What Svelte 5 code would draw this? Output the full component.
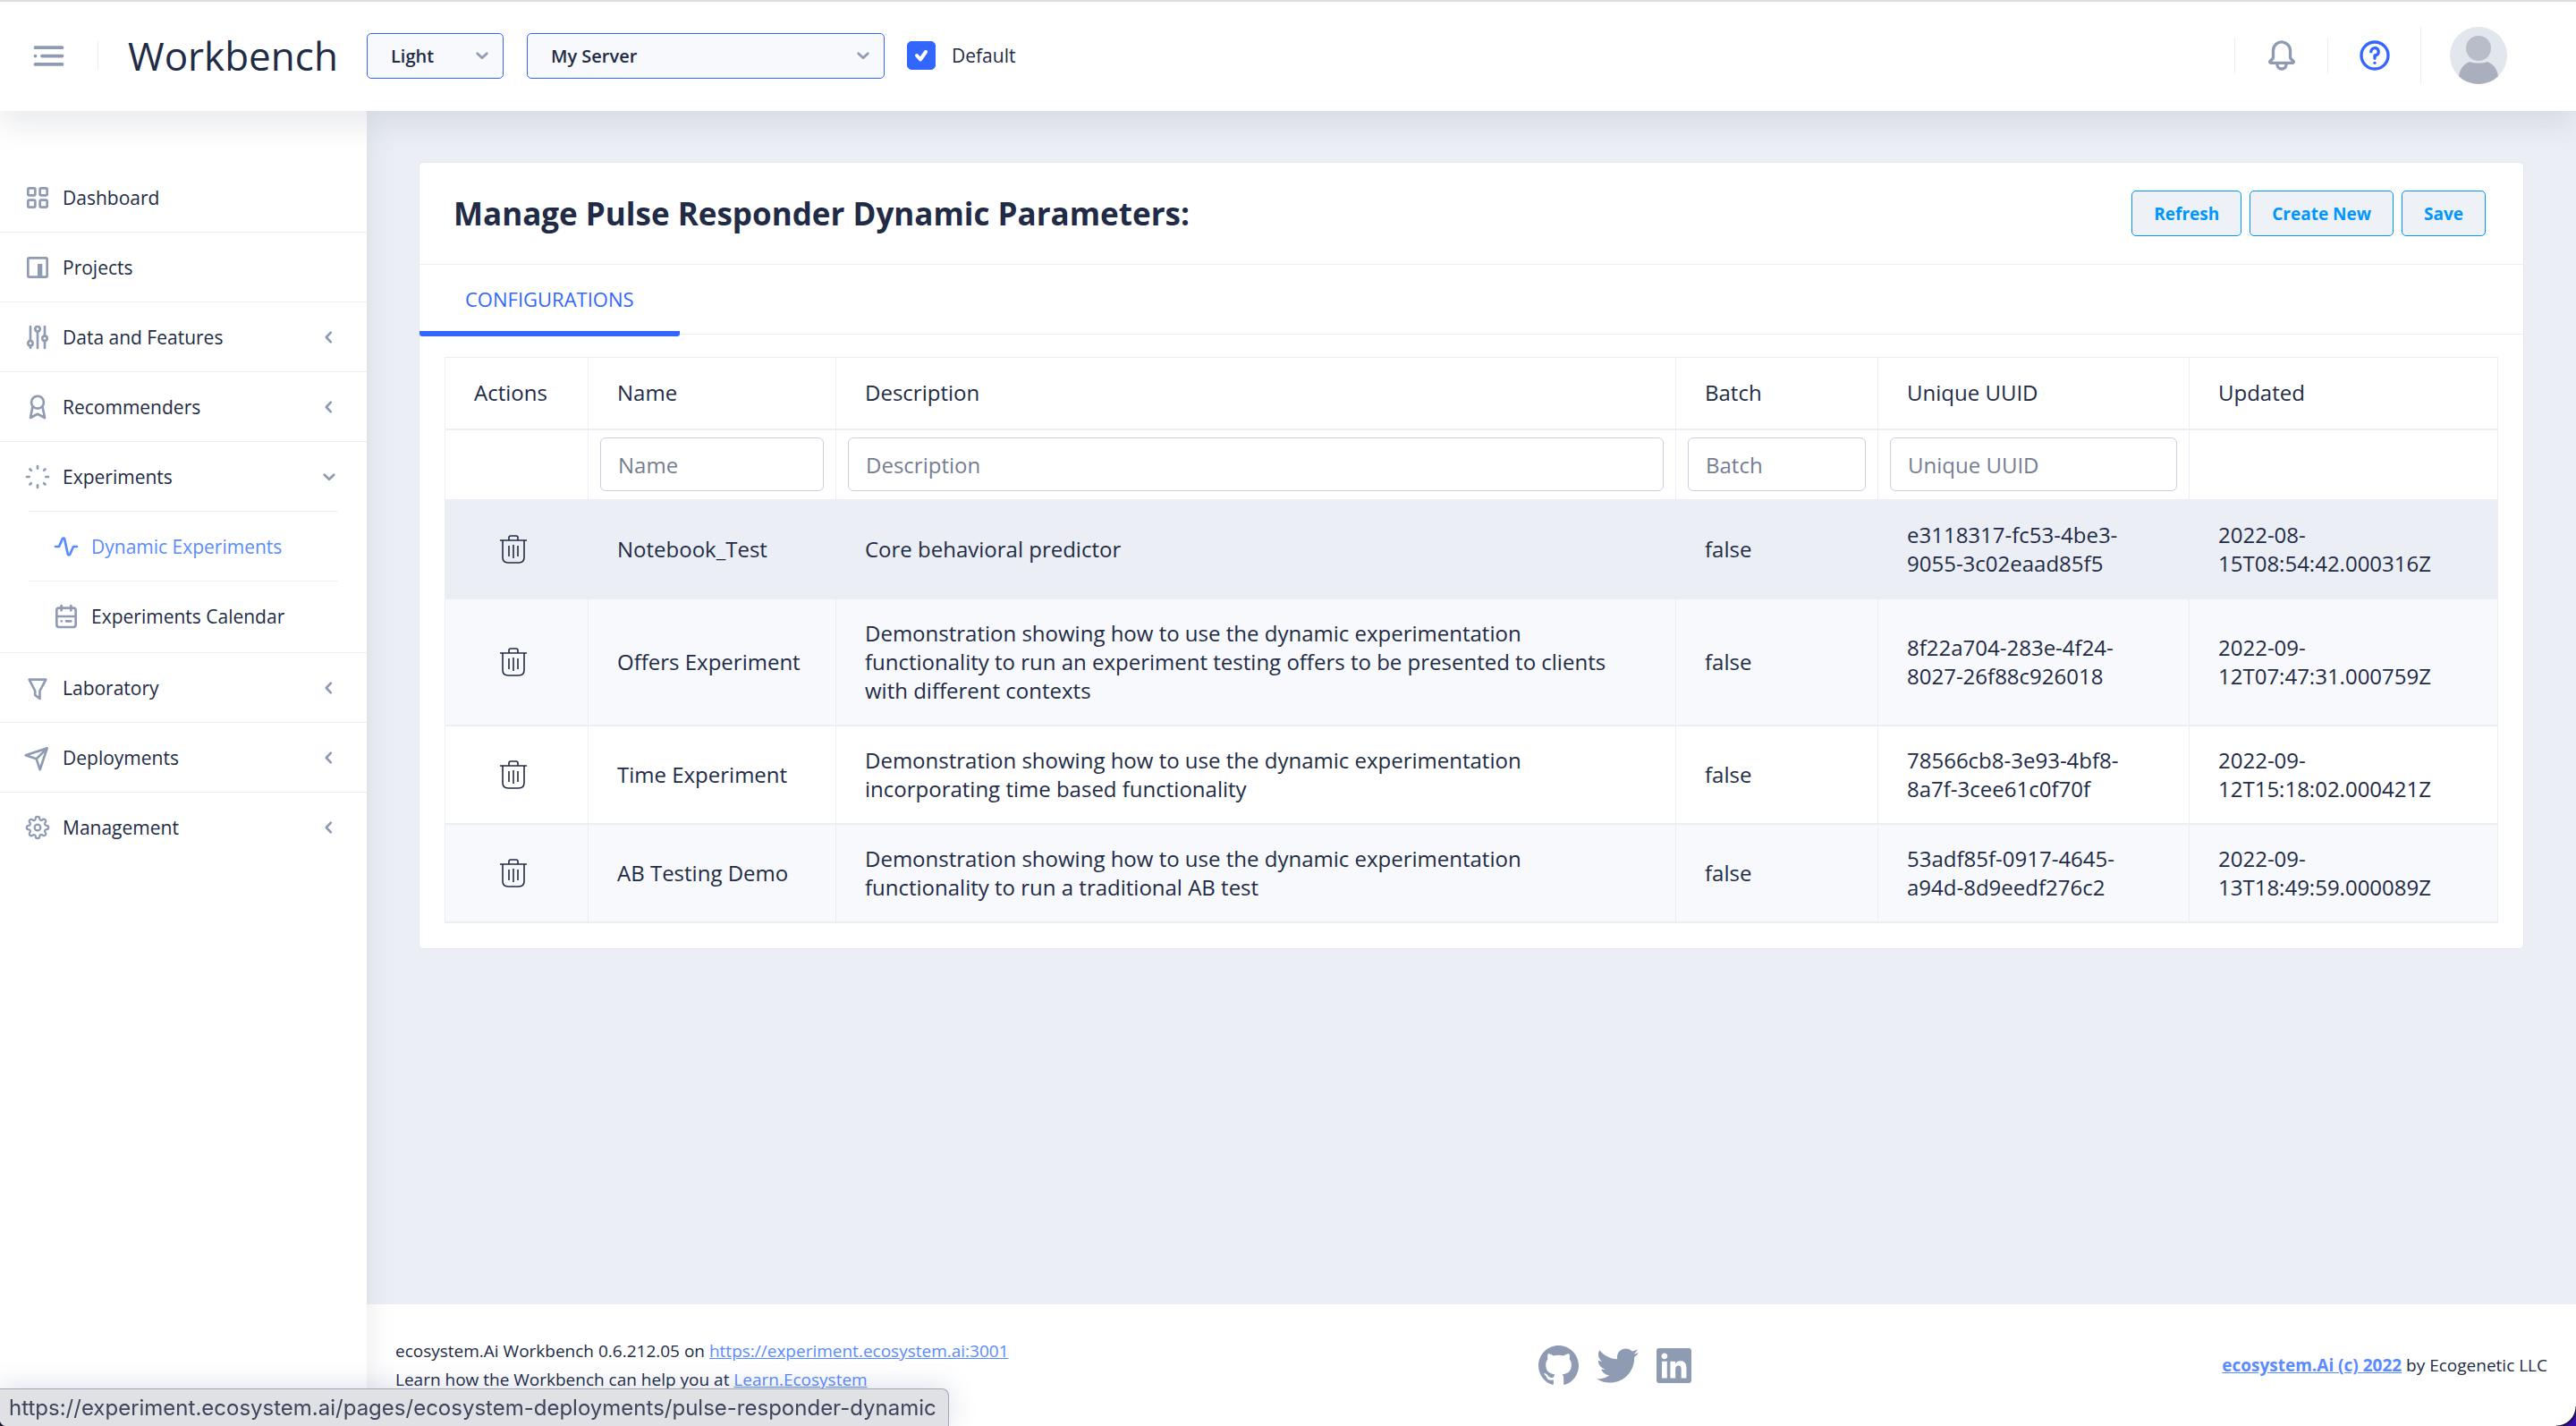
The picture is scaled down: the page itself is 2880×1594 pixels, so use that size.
<script>
  let theme = 'Light';
  let server = 'My Server';
  let isDefault = true;

  const menu = [
    { title: 'Dashboard', icon: 'grid' },
    { title: 'Projects', icon: 'projects' },
    { title: 'Data and Features', icon: 'options', group: true },
    { title: 'Recommenders', icon: 'award', group: true },
    {
      title: 'Experiments',
      icon: 'loader',
      group: true,
      children: [
        { title: 'Dynamic Experiments', icon: 'activity', active: true },
        { title: 'Experiments Calendar', icon: 'calendar' }
      ]
    },
    { title: 'Laboratory', icon: 'funnel', group: true },
    { title: 'Deployments', icon: 'plane', group: true },
    { title: 'Management', icon: 'settings', group: true }
  ];

  const columns = [
    { key: 'name', title: 'Name' },
    { key: 'description', title: 'Description' },
    { key: 'batch', title: 'Batch' },
    { key: 'uuid', title: 'Unique UUID' },
    { key: 'updated', title: 'Updated', noFilter: true }
  ];

  const rows = [
    {
      name: 'Notebook_Test',
      description: 'Core behavioral predictor',
      batch: 'false',
      uuid: 'e3118317-fc53-4be3-9055-3c02eaad85f5',
      updated: '2022-08-15T08:54:42.000316Z'
    },
    {
      name: 'Offers Experiment',
      description:
        'Demonstration showing how to use the dynamic experimentation functionality to run an experiment testing offers to be presented to clients with different contexts',
      batch: 'false',
      uuid: '8f22a704-283e-4f24-8027-26f88c926018',
      updated: '2022-09-12T07:47:31.000759Z'
    },
    {
      name: 'Time Experiment',
      description:
        'Demonstration showing how to use the dynamic experimentation incorporating time based functionality',
      batch: 'false',
      uuid: '78566cb8-3e93-4bf8-8a7f-3cee61c0f70f',
      updated: '2022-09-12T15:18:02.000421Z'
    },
    {
      name: 'AB Testing Demo',
      description:
        'Demonstration showing how to use the dynamic experimentation functionality to run a traditional AB test',
      batch: 'false',
      uuid: '53adf85f-0917-4645-a94d-8d9eedf276c2',
      updated: '2022-09-13T18:49:59.000089Z'
    }
  ];

  let filters = { name: '', description: '', batch: '', uuid: '' };
  let selected = 0;

  $: visible = rows.filter((row) =>
    Object.keys(filters).every((key) => row[key].toLowerCase().includes(filters[key].toLowerCase()))
  );
</script>

{#snippet icon(name)}
  <svg class="icon" viewBox="0 0 24 24" aria-hidden="true">
    {#if name === 'grid'}
      <g class="line">
        <rect x="4" y="4" width="6" height="6" rx="1" />
        <rect x="14" y="4" width="6" height="6" rx="1" />
        <rect x="4" y="14" width="6" height="6" rx="1" />
        <rect x="14" y="14" width="6" height="6" rx="1" />
      </g>
    {:else if name === 'projects'}
      <rect class="line" x="4" y="4" width="16" height="16" rx="1" />
      <rect x="12" y="9" width="4" height="11" />
    {:else if name === 'options'}
      <g class="line">
        <path d="M6 3v12M6 19v2M12 7v14M18 3v8M18 15v6" />
        <circle cx="6" cy="17" r="2" />
        <circle cx="12" cy="5" r="2" />
        <circle cx="18" cy="13" r="2" />
      </g>
    {:else if name === 'award'}
      <g class="line">
        <circle cx="12" cy="8" r="5.2" />
        <path d="M7.8 12L6 21l6-3.2L18 21l-1.8-9" />
      </g>
    {:else if name === 'loader'}
      <path
        class="line"
        d="M12 3v2M12 19v2M3 12h2M19 12h2M5.6 5.6l1 1M17.4 17.4l1 1M18.4 5.6l-1 1M6.6 17.4l-1 1"
      />
    {:else if name === 'activity'}
      <path
        d="M14.33 20h-.21a2 2 0 0 1-1.76-1.58L9.68 6l-2.76 6.4A1 1 0 0 1 6 13H3a1 1 0 0 1 0-2h2.34l2.51-5.79a2 2 0 0 1 3.79.38L14.32 18l2.76-6.38A1 1 0 0 1 18 11h3a1 1 0 0 1 0 2h-2.34l-2.51 5.79A2 2 0 0 1 14.33 20z"
      />
    {:else if name === 'calendar'}
      <g class="line">
        <rect x="4" y="5" width="16" height="16" rx="2" />
        <path d="M8 3v4M16 3v4M4 12h16M8 16h.01M12 16h4" />
      </g>
    {:else if name === 'funnel'}
      <path
        d="M13.9 22a1 1 0 0 1-.6-.2l-4-3.05a1 1 0 0 1-.39-.8v-3.27l-4.8-9.22A1 1 0 0 1 5 4h14a1 1 0 0 1 .86.49 1 1 0 0 1 0 1l-5 9.21V21a1 1 0 0 1-.55.9 1 1 0 0 1-.41.1zm-3-4.54l2 1.53v-4.55A1 1 0 0 1 13 14l4.3-8H6.64l4.13 8a1 1 0 0 1 .11.46z"
      />
    {:else if name === 'plane'}
      <path
        d="M21 4a1.31 1.31 0 0 0-.06-.27v-.09a1 1 0 0 0-.2-.3 1 1 0 0 0-.29-.19h-.09a.86.86 0 0 0-.31-.15H20a1 1 0 0 0-.3 0l-18 6a1 1 0 0 0 0 1.9l8.53 2.84 2.84 8.53a1 1 0 0 0 1.9 0l6-18A1 1 0 0 0 21 4zm-4.7 2.29l-5.57 5.57L5.16 10zM14 18.84l-1.86-5.57 5.57-5.57z"
      />
    {:else if name === 'settings'}
      <g class="line" transform="translate(2 2) scale(0.833)">
        <circle cx="12" cy="12" r="3" />
        <path
          d="M19.4 15a1.65 1.65 0 0 0 .33 1.82l.06.06a2 2 0 0 1 0 2.83 2 2 0 0 1-2.83 0l-.06-.06a1.65 1.65 0 0 0-1.82-.33 1.65 1.65 0 0 0-1 1.51V21a2 2 0 0 1-2 2 2 2 0 0 1-2-2v-.09A1.65 1.65 0 0 0 9 19.4a1.65 1.65 0 0 0-1.82.33l-.06.06a2 2 0 0 1-2.83 0 2 2 0 0 1 0-2.83l.06-.06a1.65 1.65 0 0 0 .33-1.82 1.65 1.65 0 0 0-1.51-1H3a2 2 0 0 1-2-2 2 2 0 0 1 2-2h.09A1.65 1.65 0 0 0 4.6 9a1.65 1.65 0 0 0-.33-1.82l-.06-.06a2 2 0 0 1 0-2.83 2 2 0 0 1 2.83 0l.06.06a1.65 1.65 0 0 0 1.82.33H9a1.65 1.65 0 0 0 1-1.51V3a2 2 0 0 1 2-2 2 2 0 0 1 2 2v.09a1.65 1.65 0 0 0 1 1.51 1.65 1.65 0 0 0 1.82-.33l.06-.06a2 2 0 0 1 2.83 0 2 2 0 0 1 0 2.83l-.06.06a1.65 1.65 0 0 0-.33 1.82V9a1.65 1.65 0 0 0 1.51 1H21a2 2 0 0 1 2 2 2 2 0 0 1-2 2h-.09a1.65 1.65 0 0 0-1.51 1z"
        />
      </g>
    {:else if name === 'menu'}
      <path class="line" d="M4 7h16M4 12h.01M8 12h12M4 17h16" />
    {:else if name === 'bell'}
      <path
        d="M20.52 15.21l-1.8-1.81V8.94a6.86 6.86 0 0 0-5.82-6.88 6.74 6.74 0 0 0-7.62 6.67v4.67l-1.8 1.81A1.64 1.64 0 0 0 4.64 18H8v.34A3.84 3.84 0 0 0 12 22a3.84 3.84 0 0 0 4-3.66V18h3.36a1.64 1.64 0 0 0 1.16-2.79zM14 18.34A1.88 1.88 0 0 1 12 20a1.88 1.88 0 0 1-2-1.66V18h4zM5.51 16l1.18-1.18a2 2 0 0 0 .59-1.42V8.73A4.73 4.73 0 0 1 8.9 5.17 4.67 4.67 0 0 1 12.64 4a4.86 4.86 0 0 1 4.08 4.9v4.5a2 2 0 0 0 .58 1.42L18.49 16z"
      />
    {:else if name === 'help'}
      <circle class="line" cx="12" cy="12" r="9" />
      <path
        d="M12 6a3.5 3.5 0 0 0-3.5 3.5 1 1 0 0 0 2 0A1.5 1.5 0 1 1 12 11a1 1 0 0 0-1 1v2a1 1 0 0 0 2 0v-1.16A3.49 3.49 0 0 0 12 6z"
      />
      <circle cx="12" cy="17" r="1" />
    {:else if name === 'down'}
      <path class="line" d="M8 10.3l4 3.8 4-3.8" />
    {:else if name === 'left'}
      <path class="line" d="M13.4 8l-3.8 4 3.8 4" />
    {/if}
  </svg>
{/snippet}

{#snippet entry(item)}
  <a href="#{item.icon}" class:active={item.active}>
    {@render icon(item.icon)}
    <span>{item.title}</span>
    {#if item.group}
      {@render icon(item.children ? 'down' : 'left')}
    {/if}
  </a>
{/snippet}

<div class="page">
  <header>
    <button class="toggle" aria-label="Toggle menu">{@render icon('menu')}</button>
    <a class="logo" href="#home">Workbench</a>
    <div class="select theme">
      <select bind:value={theme} aria-label="Theme">
        <option>Light</option>
        <option>Dark</option>
      </select>
      {@render icon('down')}
    </div>
    <div class="select server">
      <select bind:value={server} aria-label="Server">
        <option>My Server</option>
      </select>
      {@render icon('down')}
    </div>
    <label class="checkbox">
      <span class="box">
        <input type="checkbox" bind:checked={isDefault} />
        <svg viewBox="0 0 32 32" aria-hidden="true"><path d="M11 16l4 4.500 6-8.500" /></svg>
      </span>
      Default
    </label>
    <div class="actions">
      <button class="action" aria-label="Notifications">{@render icon('bell')}</button>
      <button class="action help" aria-label="Help">{@render icon('help')}</button>
      <button class="user" aria-label="User">
        <svg viewBox="0 0 64 64" aria-hidden="true">
          <clipPath id="face"><circle cx="32" cy="32" r="32" /></clipPath>
          <g clip-path="url(#face)">
            <rect width="64" height="64" fill="#e2e6ed" />
            <circle cx="32" cy="24" r="14" fill="#b8bdc9" />
            <path
              d="M10 56c1-9 5-14 12-17 6 2 14 2 20 0 7 3 11 8 12 17v10H10z"
              fill="#a9afbc"
            />
          </g>
        </svg>
      </button>
    </div>
  </header>

  <div class="body">
    <nav>
      <ul>
        {#each menu as item}
          <li>
            {@render entry(item)}
            {#if item.children}
              <ul class="sub">
                {#each item.children as child}
                  <li>{@render entry(child)}</li>
                {/each}
              </ul>
            {/if}
          </li>
        {/each}
      </ul>
    </nav>

    <div class="content">
      <main>
        <section class="card">
          <div class="card-header">
            <h1>Manage Pulse Responder Dynamic Parameters:</h1>
            <div class="buttons">
              <button>Refresh</button>
              <button>Create New</button>
              <button>Save</button>
            </div>
          </div>
          <div class="tabs">
            <a href="#configurations">CONFIGURATIONS</a>
          </div>
          <div class="table-wrap">
            <table>
              <colgroup>
                <col class="c-actions" />
                <col class="c-name" />
                <col />
                <col class="c-batch" />
                <col class="c-uuid" />
                <col class="c-updated" />
              </colgroup>
              <thead>
                <tr>
                  <th>Actions</th>
                  {#each columns as column}
                    <th>{column.title}</th>
                  {/each}
                </tr>
                <tr class="filters">
                  <td></td>
                  {#each columns as column}
                    <td>
                      {#if !column.noFilter}
                        <input
                          type="text"
                          placeholder={column.title}
                          aria-label={column.title}
                          bind:value={filters[column.key]}
                        />
                      {/if}
                    </td>
                  {/each}
                </tr>
              </thead>
              <tbody>
                {#each visible as row, i}
                  <tr class:selected={i === selected} on:click={() => (selected = i)}>
                    <td>
                      <button class="trash" aria-label="Delete {row.name}">
                        <svg viewBox="0 0 30 32" aria-hidden="true">
                          <path
                            d="M0 6h30M10 6V3q0-2 2-2h6q2 0 2 2v3M3 6v19q0 6 6 6h12q6 0 6-6V6M10 12v12M15 11v15M20 12v12"
                          />
                        </svg>
                      </button>
                    </td>
                    {#each columns as column}
                      <td>{row[column.key]}</td>
                    {/each}
                  </tr>
                {/each}
              </tbody>
            </table>
          </div>
        </section>
      </main>

      <footer>
        <p>
          ecosystem.Ai Workbench 0.6.212.05 on
          <a href="https://experiment.ecosystem.ai:3001">https://experiment.ecosystem.ai:3001</a><br />
          Learn how the Workbench can help you at <a href="#learn">Learn.Ecosystem</a>
        </p>
        <div class="socials">
          <a href="#github" aria-label="GitHub">
            <svg class="github" viewBox="0 0 16 16">
              <path
                d="M8 0C3.58 0 0 3.58 0 8c0 3.54 2.29 6.53 5.47 7.59.4.07.55-.17.55-.38 0-.19-.01-.82-.01-1.49-2.01.37-2.53-.49-2.69-.94-.09-.23-.48-.94-.82-1.13-.28-.15-.68-.52-.01-.53.63-.01 1.08.58 1.23.82.72 1.21 1.87.87 2.33.66.07-.52.28-.87.51-1.07-1.78-.2-3.64-.89-3.64-3.95 0-.87.31-1.59.82-2.15-.08-.2-.36-1.02.08-2.12 0 0 .67-.21 2.2.82.64-.18 1.32-.27 2-.27s1.36.09 2 .27c1.53-1.04 2.2-.82 2.2-.82.44 1.1.16 1.92.08 2.12.51.56.82 1.27.82 2.15 0 3.07-1.87 3.75-3.65 3.95.29.25.54.73.54 1.48 0 1.07-.01 1.93-.01 2.2 0 .21.15.46.55.38A8.01 8.01 0 0 0 16 8c0-4.42-3.58-8-8-8z"
              />
            </svg>
          </a>
          <a href="#twitter" aria-label="Twitter">
            <svg class="twitter" viewBox="0 48 512 416">
              <path
                d="M459.37 151.716c.325 4.548.325 9.097.325 13.645 0 138.72-105.583 298.558-298.558 298.558-59.452 0-114.68-17.219-161.137-47.106 8.447.974 16.568 1.299 25.34 1.299 49.055 0 94.213-16.568 130.274-44.832-46.132-.975-84.792-31.188-98.112-72.772 6.498.974 12.995 1.624 19.818 1.624 9.421 0 18.843-1.3 27.614-3.573-48.081-9.747-84.143-51.98-84.143-102.985v-1.299c13.969 7.797 30.214 12.67 47.431 13.319-28.264-18.843-46.781-51.005-46.781-87.391 0-19.492 5.197-37.36 14.294-52.954 51.655 63.675 129.3 105.258 216.365 109.807-1.624-7.797-2.599-15.918-2.599-24.04 0-57.828 46.782-104.934 104.934-104.934 30.213 0 57.502 12.67 76.67 33.137 23.715-4.548 46.456-13.32 66.599-25.34-7.798 24.366-24.366 44.833-46.132 57.827 21.117-2.273 41.584-8.122 60.426-16.243-14.292 20.791-32.161 39.308-52.628 54.253z"
              />
            </svg>
          </a>
          <a href="#linkedin" aria-label="LinkedIn">
            <svg class="linkedin" viewBox="0 32 448 448">
              <path
                d="M416 32H31.9C14.3 32 0 46.5 0 64.3v383.4C0 465.5 14.3 480 31.9 480H416c17.6 0 32-14.5 32-32.3V64.3c0-17.8-14.4-32.3-32-32.3zM135.4 416H69V202.2h66.5V416zm-33.2-243c-21.3 0-38.5-17.3-38.5-38.5S80.9 96 102.2 96c21.2 0 38.5 17.3 38.5 38.5 0 21.3-17.2 38.5-38.5 38.5zm282.1 243h-66.4V312c0-24.8-.5-56.7-34.5-56.7-34.6 0-39.9 27-39.9 54.9V416h-66.4V202.2h63.7v29.2h.9c8.9-16.8 30.6-34.5 62.9-34.5 67.2 0 79.7 44.3 79.7 101.9V416z"
              />
            </svg>
          </a>
        </div>
        <p class="copyright"><a href="#ecosystem">ecosystem.Ai (c) 2022</a> by Ecogenetic LLC</p>
      </footer>
    </div>
  </div>

  <div class="status">https://experiment.ecosystem.ai/pages/ecosystem-deployments/pulse-responder-dynamic</div>
  <div class="corner left"></div>
  <div class="corner right"></div>
</div>

<style>
  :global(body) {
    margin: 0;
    background: #ebeff5;
  }

  .page {
    --text: #222b45;
    --hint: #8f9bb3;
    --primary: #3366ff;
    --link: #598bff;
    --info: #0095ff;
    --line: #ebeff5;
    display: flex;
    flex-direction: column;
    min-height: 100vh;
    color: var(--text);
    font-family: "Open Sans", sans-serif;
    font-size: 24px;
    line-height: 32px;
  }

  .page,
  .page * {
    box-sizing: border-box;
  }

  button,
  input,
  select {
    font-family: inherit;
    color: inherit;
  }

  button {
    padding: 0;
    border: 0;
    background: none;
    cursor: pointer;
  }

  svg {
    display: block;
  }

  .icon {
    flex: none;
    width: 32px;
    height: 32px;
    fill: currentColor;
  }

  .line {
    fill: none;
    stroke: currentColor;
    stroke-width: 2;
    stroke-linecap: round;
    stroke-linejoin: round;
  }

  /* header */
  header {
    display: flex;
    align-items: center;
    height: 124px;
    padding: 0 77px 0 32px;
    background: #fff;
    box-shadow:
      inset 0 2px #dddddf,
      0 16px 32px rgba(44, 51, 73, 0.1);
    z-index: 2;
  }

  .toggle {
    height: 32px;
    padding-right: 32px;
    border-right: 1px solid var(--line);
    color: var(--hint);
    display: flex;
    align-items: center;
  }

  .toggle .icon {
    width: 45px;
    height: 45px;
  }

  .logo {
    width: 267px;
    margin-left: 33px;
    color: inherit;
    font-size: 44px;
    line-height: 64px;
    text-decoration: none;
  }

  .select {
    display: grid;
    align-items: center;
  }

  .select select,
  .select .icon {
    grid-area: 1 / 1;
  }

  .select select {
    appearance: none;
    height: 51px;
    padding: 0 48px 0 26px;
    border: 1px solid var(--primary);
    border-radius: 5px;
    background: #f8f9fd;
    font-size: 20px;
    font-weight: 600;
  }

  .select .icon {
    justify-self: end;
    margin-right: 8px;
    color: var(--hint);
    pointer-events: none;
  }

  .theme {
    width: 153px;
  }

  .server {
    width: 400px;
    margin: 0 25px 0 26px;
  }

  .checkbox {
    display: flex;
    align-items: center;
    gap: 18px;
    font-size: 21px;
  }

  .box {
    display: grid;
  }

  .box input,
  .box svg {
    grid-area: 1 / 1;
    width: 32px;
    height: 32px;
    margin: 0;
  }

  .box input {
    appearance: none;
    border: 1px solid var(--primary);
    border-radius: 5px;
  }

  .box input:checked {
    background: var(--primary);
  }

  .box svg {
    fill: none;
    stroke: #fff;
    stroke-width: 4;
    stroke-linecap: round;
    stroke-linejoin: round;
    pointer-events: none;
  }

  .actions {
    display: flex;
    align-items: center;
    margin-left: auto;
  }

  .action {
    display: flex;
    align-items: center;
    justify-content: center;
    width: 104px;
    height: 40px;
    border-left: 1px solid var(--line);
    color: var(--hint);
  }

  .action .icon {
    width: 40px;
    height: 40px;
  }

  .help {
    color: var(--primary);
  }

  .user {
    padding-left: 32px;
    border-left: 1px solid var(--line);
  }

  .user svg {
    width: 64px;
    height: 64px;
  }

  /* sidebar */
  .body {
    display: flex;
    flex: 1;
  }

  nav {
    flex: none;
    width: 410px;
    padding-top: 58px;
    background: #fff;
    box-shadow: 0 16px 32px rgba(44, 51, 73, 0.1);
    font-size: 21px;
    z-index: 1;
  }

  ul {
    margin: 0;
    padding: 0;
    list-style: none;
  }

  nav li {
    border-bottom: 1px solid var(--line);
  }

  nav li:last-child {
    border-bottom: 0;
  }

  nav a {
    display: flex;
    align-items: center;
    gap: 12px;
    height: 77px;
    padding: 0 26px;
    color: inherit;
    text-decoration: none;
  }

  nav a .icon {
    color: var(--hint);
  }

  nav a span {
    flex: 1;
  }

  nav a.active,
  nav a.active .icon {
    color: var(--link);
  }

  .sub {
    margin: 0 32px;
    padding-bottom: 2px;
    border-top: 1px solid var(--line);
  }

  /* content */
  .content {
    display: flex;
    flex: 1;
    flex-direction: column;
    min-width: 0;
  }

  main {
    flex: 1;
    padding: 57px 58px;
  }

  .card {
    border: 1px solid #e4e9f0;
    border-radius: 5px;
    background: #fff;
  }

  .card-header {
    display: flex;
    align-items: center;
    justify-content: space-between;
    height: 114px;
    padding: 0 42px 0 38px;
    border-bottom: 1px solid var(--line);
  }

  h1 {
    margin: 0;
    font-size: 35px;
    font-weight: 700;
    line-height: 48px;
  }

  .buttons {
    display: flex;
    gap: 9px;
  }

  .buttons button {
    height: 51px;
    padding: 0 24px;
    border: 1px solid var(--info);
    border-radius: 5px;
    background: #eef2f6;
    color: var(--info);
    font-size: 19px;
    font-weight: 700;
  }

  .tabs {
    display: flex;
    height: 78px;
    border-bottom: 1px solid var(--line);
  }

  .tabs a {
    height: 80px;
    padding: 22px 51px;
    border-bottom: 6px solid var(--primary);
    border-radius: 3px;
    color: var(--primary);
    font-size: 22px;
    text-decoration: none;
  }

  .table-wrap {
    padding: 25px 28px 28px;
  }

  table {
    width: 100%;
    table-layout: fixed;
    border-collapse: collapse;
  }

  .c-actions {
    width: 160px;
  }

  .c-name {
    width: 277px;
  }

  .c-batch {
    width: 226px;
  }

  .c-uuid {
    width: 348px;
  }

  .c-updated {
    width: 345px;
  }

  th,
  td {
    height: 80px;
    padding: 22px 32px;
    border: 1px solid var(--line);
    border-bottom-width: 2px;
    font-weight: 400;
    text-align: left;
  }

  tbody tr:nth-child(even) {
    background: #f8f9fd;
  }

  tbody tr.selected {
    background: #ebeff5;
  }

  .filters td {
    height: 79px;
    padding: 0 13px;
  }

  .filters input {
    display: block;
    width: 100%;
    height: 60px;
    padding: 0 19px;
    border: 1px solid #c9d0dc;
    border-radius: 6px;
    background: #fff;
    font-size: 24px;
  }

  .filters input::placeholder {
    color: #757d92;
    opacity: 1;
  }

  .trash {
    display: block;
    margin-left: 29px;
  }

  .trash svg {
    width: 30px;
    height: 32px;
    fill: none;
    stroke: var(--text);
    stroke-width: 1.6;
  }

  /* footer */
  footer {
    display: flex;
    align-items: center;
    justify-content: space-between;
    height: 136px;
    padding: 0 32px;
    background: #fff;
    font-size: 19px;
  }

  footer p {
    margin: 0;
  }

  footer a {
    color: var(--link);
  }

  .copyright a {
    font-weight: 700;
  }

  .socials {
    display: flex;
    align-items: center;
    gap: 20px;
  }

  .socials svg {
    fill: var(--hint);
  }

  .github {
    width: 45px;
    height: 45px;
  }

  .twitter {
    width: 47px;
    height: 39px;
  }

  .linkedin {
    width: 39px;
    height: 39px;
  }

  /* browser chrome */
  .status {
    position: fixed;
    left: 0;
    bottom: 0;
    z-index: 3;
    height: 42px;
    padding: 0 13px 0 10px;
    border-top: 1px solid #a4a7b6;
    border-right: 1px solid #a4a7b6;
    border-top-right-radius: 8px;
    background: #dfe1e5;
    box-shadow: 0 0 32px rgba(60, 80, 140, 0.2);
    color: #3e445b;
    font-family: Inter, sans-serif;
    font-size: 24px;
    line-height: 42px;
  }

  .corner {
    position: fixed;
    bottom: 0;
    z-index: 4;
  }

  .corner.left {
    left: 0;
    width: 8px;
    height: 8px;
    background: radial-gradient(circle at 100% 0, transparent 8px, #14182b 9px);
  }

  .corner.right {
    right: 0;
    width: 22px;
    height: 22px;
    background: radial-gradient(circle at 0 0, transparent 21px, #160a3c 22px, #3a0ca8 25px);
  }
</style>
